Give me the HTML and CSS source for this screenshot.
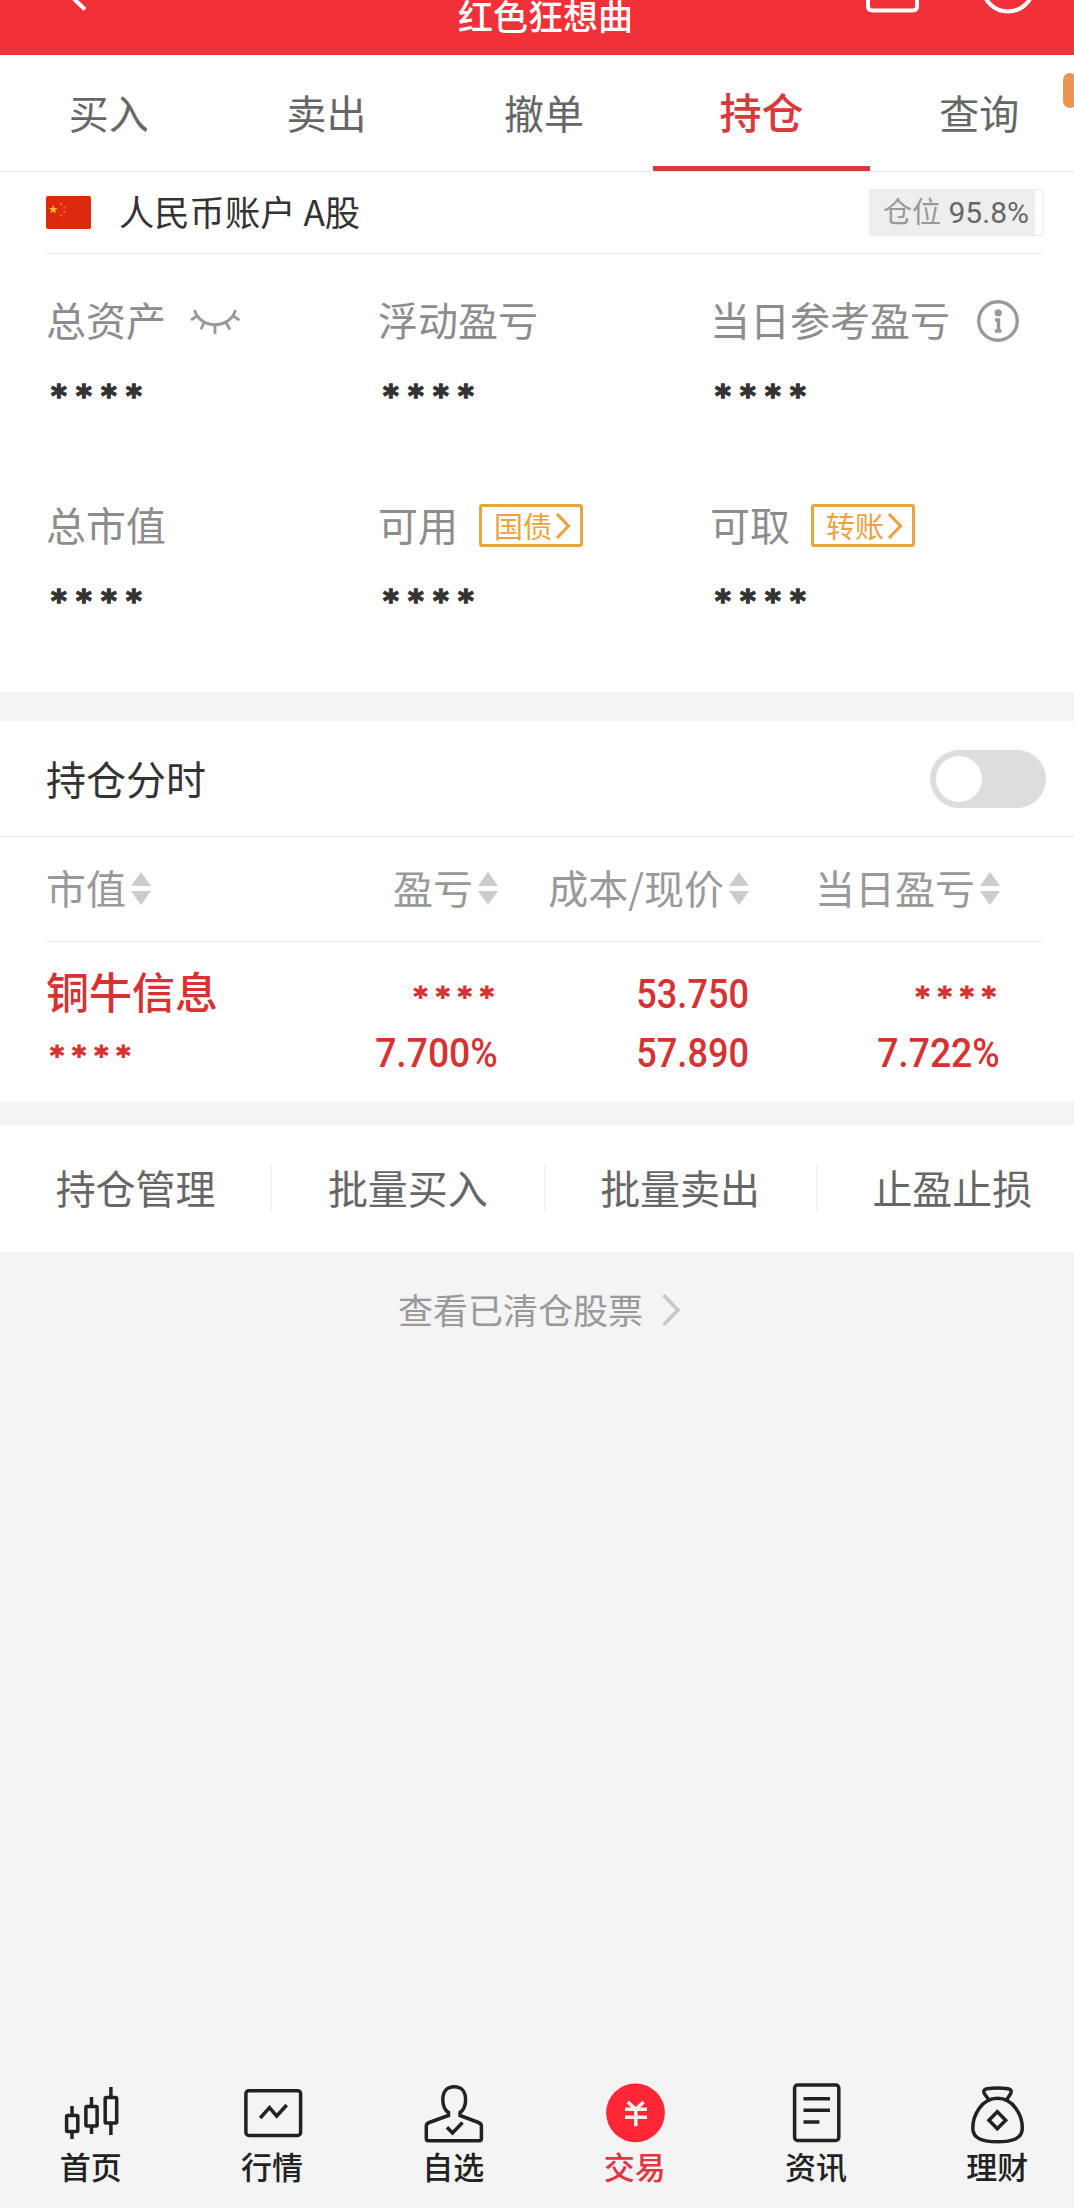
FILE: index.html
```
<!DOCTYPE html>
<html lang="zh-CN">
<head>
  <meta charset="UTF-8" />
  <meta name="viewport" content="width=device-width, initial-scale=1.0"/>
  <title>红色狂想曲</title>
  <link rel="stylesheet" href="styles.css">
</head>
<body>
<div class="page">

<header class="header">
  <svg class="back" width="16" height="12" viewBox="0 0 16 12"><path d="M1 -3L14 9.5" stroke="#fff" stroke-width="4" fill="none"/></svg>
  <div class="title">红色狂想曲</div>
  <div class="header-icons">
    <svg width="53" height="14" viewBox="0 0 53 14"><path d="M2 -4V6Q2 10.5 6.5 10.5H46.5Q51 10.5 51 6V-4" stroke="#fff" stroke-width="4" fill="none"/></svg>
    <svg width="54" height="14" viewBox="0 0 54 14"><circle cx="27" cy="-14" r="25.5" stroke="#fff" stroke-width="4" fill="none"/></svg>
  </div>
</header>

<nav class="tabs">
  <div class="tab">买入</div>
  <div class="tab">卖出</div>
  <div class="tab">撤单</div>
  <div class="tab active">持仓</div>
  <div class="tab">查询</div>
  <span class="side-handle"></span>
</nav>

<div class="account">
  <svg class="flag" width="45" height="33" viewBox="0 0 45 33">
    <rect width="45" height="33" rx="2" fill="#de2910"/>
    <path d="M7.2 9l1.2 3 3.2.1-2.5 2 .9 3.1-2.8-1.8-2.7 1.8.9-3.1-2.5-2 3.2-.1z" fill="#fdc51e"/>
    <g fill="#ef5a22"><circle cx="15" cy="8" r="1.4"/><circle cx="18.5" cy="11.5" r="1.4"/><circle cx="18.5" cy="16" r="1.4"/><circle cx="15" cy="19.5" r="1.4"/></g>
  </svg>
  <span class="account-name">人民币账户 A股</span>
  <div class="position"><div class="position-fill">仓位 <b>95.8%</b></div></div>
</div>

<section class="assets">
  <div class="asset">
    <div class="label">总资产
      <svg class="eye" width="50" height="26" viewBox="0 0 50 26"><path d="M4.500 1C10 20.500 40 20.500 45.500 1M7 7L1 11M14 13.500L11 20.500M25 15.500V25M36 13.500L40 20.500M43 7L49.500 11" stroke="#999" stroke-width="2.800" fill="none"/></svg>
    </div>
    <div class="stars">****</div>
  </div>
  <div class="asset">
    <div class="label">浮动盈亏</div>
    <div class="stars">****</div>
  </div>
  <div class="asset">
    <div class="label">当日参考盈亏
      <svg class="info" width="42" height="42" viewBox="0 0 42 42"><circle cx="21" cy="21" r="19.300" stroke="#999" stroke-width="3.400" fill="none"/><circle cx="21.200" cy="12.800" r="3.600" fill="#999"/><path d="M18 20H21.500V31M17.800 31H24.500" stroke="#999" stroke-width="3.400" fill="none"/></svg>
    </div>
    <div class="stars">****</div>
  </div>
  <div class="asset">
    <div class="label">总市值</div>
    <div class="stars">****</div>
  </div>
  <div class="asset">
    <div class="label">可用
      <span class="tag">国债<svg width="16" height="26" viewBox="0 0 16 26"><path d="M2 1L13.500 13L2 25" stroke="#eba23c" stroke-width="3.200" fill="none"/></svg></span>
    </div>
    <div class="stars">****</div>
  </div>
  <div class="asset">
    <div class="label">可取
      <span class="tag">转账<svg width="16" height="26" viewBox="0 0 16 26"><path d="M2 1L13.500 13L2 25" stroke="#eba23c" stroke-width="3.200" fill="none"/></svg></span>
    </div>
    <div class="stars">****</div>
  </div>
</section>

<section class="holdings">
  <div class="switch-row">
    <span>持仓分时</span>
    <div class="switch"></div>
  </div>
  <div class="grid-row head">
    <div>市值<i class="sort"></i></div>
    <div>盈亏<i class="sort"></i></div>
    <div>成本/现价<i class="sort"></i></div>
    <div>当日盈亏<i class="sort"></i></div>
  </div>
  <div class="grid-row stock">
    <div><span class="name">铜牛信息</span><span class="mask">****</span></div>
    <div><span class="mask">****</span><span class="num percent">7.700%</span></div>
    <div><span class="num">53.750</span><span class="num">57.890</span></div>
    <div><span class="mask">****</span><span class="num percent">7.722%</span></div>
  </div>
</section>

<div class="actions">
  <div class="action">持仓管理</div>
  <div class="action">批量买入</div>
  <div class="action">批量卖出</div>
  <div class="action">止盈止损</div>
</div>

<div class="cleared">查看已清仓股票
  <svg width="18" height="32" viewBox="0 0 18 32"><path d="M1.500 1L16 16L1.500 31" stroke="#c8c8c8" stroke-width="3.600" fill="none"/></svg>
</div>

<footer class="footer">
  <div class="nav-item">
    <svg viewBox="0 0 60 60"><rect x="5.600" y="33.500" width="11.200" height="16" rx="1"/><rect x="24.900" y="24.500" width="11.200" height="19.500" rx="1"/><rect x="44.200" y="15.500" width="11.500" height="25.500" rx="1"/><path d="M11 24V33M11 50V57M30.500 15V24M30.500 45V52M49.900 5V15M49.900 42V53"/></svg>
    <span>首页</span>
  </div>
  <div class="nav-item">
    <svg viewBox="0 0 60 60"><rect x="3.900" y="8.700" width="54.700" height="44.800" rx="3"/><path d="M18.200 36L27.500 25.700L34.700 34L44.700 23"/></svg>
    <span>行情</span>
  </div>
  <div class="nav-item">
    <svg viewBox="0 0 60 60"><path d="M25.500 30.500C21.500 28 19.800 23.500 19.800 17.500C19.800 9 24.500 4.700 31.200 4.700S42.600 9 42.600 17.500C42.600 23.500 41 28 37 30.500V33.500L55.500 40.500Q58.400 41.600 58.400 44V56.500Q58.400 58.700 56.200 58.700H5.500Q3.300 58.700 3.300 56.500V44Q3.300 41.600 6.200 40.500L25.500 33.500ZM24 45.300L29.500 51L39.500 40.500"/></svg>
    <span>自选</span>
  </div>
  <div class="nav-item active">
    <svg viewBox="0 0 60 60"><circle cx="30.500" cy="30.800" r="29.400"/><path d="M22.800 20L30.800 27.300L38.600 20M20 27.300H42M20 35.300H42M30.800 27V44.300"/></svg>
    <span>交易</span>
  </div>
  <div class="nav-item">
    <svg viewBox="0 0 60 60"><rect x="8.600" y="3" width="44.200" height="55.400" rx="3"/><path d="M17.500 16.700H44M17.500 28.300H44M17.500 40H33.400"/></svg>
    <span>资讯</span>
  </div>
  <div class="nav-item">
    <svg viewBox="0 0 60 60"><path d="M30.500 16.300C14 16.300 5.800 34 5.800 46C5.800 57 16 59.700 30.500 59.700S55.300 57 55.300 46C55.300 34 47 16.300 30.500 16.300ZM22 18L17.600 12Q15.200 7.800 20 6.800Q30.500 5 41 6.800Q45.800 7.800 43.400 12L39.500 18M30.300 29.700L38.700 38.200L30.300 46.700L22 38.200Z"/></svg>
    <span>理财</span>
  </div>
</footer>

</div>
</body>
</html>
```
FILE: styles.css
```
* {
  box-sizing: border-box;
}
html {
  overflow: hidden;
}
body {
  margin: 0;
  background: #f4f4f4;
  font-family: "Noto Sans CJK SC", sans-serif;
  overflow: hidden;
}
.page {
  width: 1088px;
  height: 2208px;
  display: flex;
  flex-direction: column;
}
svg {
  display: block;
  flex: none;
}
.header {
  display: flex;
  justify-content: space-between;
  height: 55px;
  padding: 0 53px 0 71px;
  background: #f23038;
  color: #fff;
}
.back {
  margin-right: 138px;
}
.title {
  font-size: 35px;
  line-height: 30px;
  font-weight: 500;
}
.header-icons {
  display: flex;
  gap: 62px;
}
.tabs {
  position: relative;
  display: flex;
  height: 117px;
  background: #fff;
  border-bottom: 1px solid #ececec;
}
.tab {
  flex: 1;
  text-align: center;
  font-size: 40px;
  line-height: 114px;
  color: #666;
}
.tab.active {
  font-size: 42px;
  line-height: 112px;
  font-weight: 500;
  color: #d83a3a;
  border-bottom: 5px solid #d83a3a;
}
.side-handle {
  position: absolute;
  top: 18px;
  left: 1063px;
  width: 14px;
  height: 35px;
  border-radius: 7px;
  background: #ef944e;
}
.account {
  display: flex;
  align-items: center;
  height: 82px;
  padding: 0 45px 0 0;
  background: linear-gradient(#ececec, #ececec) 46px 100% / 997px 1px no-repeat, #fff;
}
.flag {
  margin: -1px 0 0 46px;
}
.account-name {
  margin-left: 28px;
  font-size: 35.3px;
  line-height: 40px;
  padding-bottom: 4px;
  color: #333;
}
.position {
  width: 174px;
  height: 47px;
  margin: -2px 0 0 auto;
  border: 1px solid #ececec;
}
.position-fill {
  width: 165px;
  height: 45px;
  padding-left: 13px;
  background: #eee;
  font-size: 29px;
  line-height: 41px;
  white-space: nowrap;
  color: #999;
}
.position-fill b {
  margin-left: 1px;
  font-family: Roboto, sans-serif;
  font-weight: 400;
  font-size: 30px;
  color: #666;
}
.assets {
  display: grid;
  grid-template-columns: 332px 332px 1fr;
  grid-auto-rows: 205px;
  height: 438px;
  padding: 42px 0 0 46px;
  background: #fff;
}
.label {
  display: flex;
  align-items: center;
  height: 46px;
  font-size: 40px;
  color: #8c8c8c;
  white-space: nowrap;
}
.eye {
  margin: 6px 0 0 24px;
}
.info {
  margin: 4px 0 0 27px;
}
.tag {
  display: flex;
  align-items: center;
  height: 43px;
  width: 104px;
  margin: 2px 0 0 21px;
  padding-left: 12px;
  border: 3px solid #e6a540;
  border-radius: 3px;
  font-size: 29px;
  line-height: 34px;
  padding-bottom: 1px;
  color: #eba23c;
}
.tag svg {
  margin: 2px 0 0 3px;
}
.stars {
  margin-top: 30px;
  padding-left: 5px;
  font-family: "DejaVu Sans", sans-serif;
  font-weight: bold;
  font-size: 30px;
  line-height: 48px;
  letter-spacing: 9.3px;
  color: #333;
  -webkit-text-stroke: 1.4px #333;
}
.holdings {
  height: 381px;
  margin-top: 29px;
  background: #fff;
}
.switch-row {
  display: flex;
  justify-content: space-between;
  height: 116px;
  padding: 0 42px 0 46px;
  border-bottom: 1px solid #ececec;
  font-size: 40px;
  line-height: 114px;
  color: #333;
}
.switch {
  width: 116px;
  height: 58px;
  margin-top: 29px;
  padding: 6px;
  border-radius: 29px;
  background: #ddd;
}
.switch::before {
  content: "";
  display: block;
  width: 46px;
  height: 46px;
  border-radius: 50%;
  background: #fff;
}
.grid-row {
  display: grid;
  grid-template-columns: 201px 251px 251px 251px;
  margin: 0 45px 0 46px;
}
.head {
  height: 105px;
  border-bottom: 1px solid #ececec;
  font-size: 40px;
  line-height: 101px;
  color: #999;
}
.head div {
  display: flex;
}
.head div + div {
  justify-content: flex-end;
}
.sort {
  align-self: center;
  margin: -1px 0 0 5px;
}
.sort::before,
.sort::after {
  content: "";
  display: block;
  border: 10px solid transparent;
}
.sort::before {
  border-top: 0;
  border-bottom: 14px solid #ccc;
  margin-bottom: 5px;
}
.sort::after {
  border-bottom: 0;
  border-top: 14px solid #ccc;
}
.stock {
  padding-top: 22px;
  color: #d63232;
}
.stock div {
  display: flex;
  flex-direction: column;
}
.stock div + div {
  align-items: flex-end;
}
.stock span {
  height: 59px;
  line-height: 60px;
}
.stock .name {
  font-size: 43px;
  font-weight: 500;
  line-height: 53px;
}
.num {
  font-family: Roboto, sans-serif;
  font-size: 41px;
  font-weight: 500;
  transform: scaleX(0.88);
  transform-origin: right;
}
.percent {
  transform: scaleX(0.91);
}
.mask {
  padding: 3px 0 0 4px;
  font-family: "DejaVu Sans", sans-serif;
  font-weight: bold;
  font-size: 27px;
  letter-spacing: 8px;
  -webkit-text-stroke: 1px #d63232;
}
.stock div + div .mask {
  margin-right: -4px;
}
.actions {
  display: flex;
  height: 127px;
  margin-top: 23px;
  background: #fff;
}
.action {
  flex: 1;
  margin: 40px 0;
  line-height: 44px;
  text-align: center;
  font-size: 40px;
  color: #666;
}
.action + .action {
  border-left: 1px solid #ececec;
}
.cleared {
  display: flex;
  align-items: center;
  height: 116px;
  padding: 0 0 4px 398px;
  font-size: 35px;
  color: #999;
}
.cleared svg {
  margin: 4px 0 0 19px;
}
.footer {
  display: flex;
  margin-top: auto;
  padding-bottom: 22px;
}
.nav-item {
  flex: 1;
  display: flex;
  flex-direction: column;
  align-items: center;
  font-size: 31px;
  line-height: 40px;
  font-weight: 500;
  color: #222;
}
.nav-item svg {
  width: 60px;
  height: 60px;
  margin-bottom: 4px;
  overflow: visible;
  fill: none;
  stroke: #222;
  stroke-width: 3.5;
}
.nav-item.active {
  color: #e63343;
}
.nav-item.active svg {
  stroke: #fff0f0;
}
.nav-item.active circle {
  fill: #ff2635;
  stroke: none;
}
```
